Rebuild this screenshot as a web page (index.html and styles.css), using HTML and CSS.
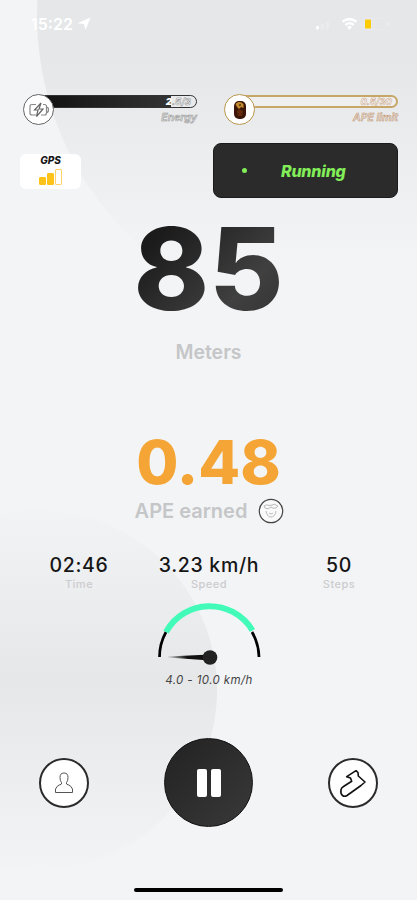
FILE: index.html
```
<!DOCTYPE html>
<html lang="en">
<head>
    <meta charset="UTF-8">
    <meta name="viewport" content="width=device-width, initial-scale=1.0">
    <title>Running</title>
    <link rel="stylesheet" href="styles.css">
</head>
<body>
<div class="screen">

    <header class="status-bar">
        <div class="clock">
            <span>15:22</span>
            <svg width="14" height="14" viewBox="0 0 14 14"><path d="M13.5 .5 L8.5 13 L7 7 L.5 6.2 Z" fill="#fff"/></svg>
        </div>
        <svg class="status-icons" width="76" height="18" viewBox="0 0 76 18">
            <rect x="1" y="11" width="3" height="3.5" rx="1" fill="#fff"/>
            <rect x="6" y="9" width="3" height="5.5" rx="1" fill="#ebecee"/>
            <rect x="11" y="7" width="3" height="7.5" rx="1" fill="#ebecee"/>
            <path d="M27.500 6.700 Q34.500 1.500 41.500 6.700" fill="none" stroke="#fff" stroke-width="2.500"/>
            <path d="M30.200 10 Q34.500 6.500 38.800 10" fill="none" stroke="#fff" stroke-width="2.300"/>
            <path d="M32 12 Q34.500 10 37 12 L34.500 15 Z" fill="#fff"/>
            <rect x="48.500" y="3.500" width="23" height="11" rx="3.500" fill="none" stroke="#e9eaec"/>
            <rect x="50" y="4.500" width="6" height="9" rx="1" fill="#ffcb05"/>
            <path d="M74 7v4" stroke="#f0f1f3"/>
        </svg>
    </header>

    <section class="meters">
        <div class="meter energy">
            <div class="badge">
                <svg width="22" height="18" viewBox="0 0 22 18" fill="none" stroke="#888" stroke-width="1.200">
                    <path d="M8 3.500H4Q2 3.500 2 5.500V12Q2 14 4 14H8M15 3.500H16.500Q18.500 3.500 18.500 5.500V12Q18.500 14 16.500 14H13M18.500 6Q20.500 6 20.500 8.700T18.500 11.500"/>
                    <path d="M13 2L6.500 9H10L8.500 15.500L15 8H11Z" stroke="#666"/>
                </svg>
            </div>
            <div class="track"><div class="fill" style="width: 84%"></div><span><b>2</b>.5/3</span></div>
            <p>Energy</p>
        </div>
        <div class="meter ape">
            <div class="badge">
                <svg width="14" height="20" viewBox="0 0 14 20">
                    <rect x="1" y="1" width="12" height="18" rx="5" fill="#3b1608"/>
                    <path d="M2.500 4Q6 0 10.500 4V8L8 7L6 9L4 7Z" fill="#c28a2c"/>
                    <path d="M4 11L6 9L10 11L9 16H5Z" fill="#63290d"/>
                    <path d="M6 5h2" stroke="#1d0b05"/>
                </svg>
            </div>
            <div class="track"><span>0.5/30</span></div>
            <p>APE limit</p>
        </div>
    </section>

    <section class="state-row">
        <div class="gps">
            <span>GPS</span>
            <div class="bars"><i class="low"></i><i class="mid"></i><i class="high"></i></div>
        </div>
        <div class="state"><i class="dot"></i><span>Running</span></div>
    </section>

    <section class="distance">
        <div class="distance-value">85</div>
        <div class="distance-label">Meters</div>
    </section>

    <section class="earned">
        <div class="earned-value">0.48</div>
        <div class="earned-label">
            <span>APE earned</span>
            <svg width="26" height="26" viewBox="0 0 26 26" fill="none">
                <circle cx="13" cy="13" r="11.700" fill="#fafafa" stroke="#444" stroke-width="1.200"/>
                <path d="M6 8Q8 6 12 7.500Q17 5 20 8L18 10Q15 11 13 9Q10 12 7 10ZM8 13Q9 19 13 19Q17 19 18 13M11 15Q13 17 15 15" stroke="#aaa" stroke-width=".8"/>
            </svg>
        </div>
    </section>

    <section class="stats">
        <div class="stat"><strong>02:46</strong><span>Time</span></div>
        <div class="stat"><strong>3.23 km/h</strong><span>Speed</span></div>
        <div class="stat"><strong>50</strong><span>Steps</span></div>
    </section>

    <section class="gauge">
        <svg width="108" height="64" viewBox="0 0 108 64" fill="none">
            <defs>
                <linearGradient id="needle"><stop offset="0" stop-color="#111" stop-opacity=".1"/><stop offset=".45" stop-color="#111"/></linearGradient>
            </defs>
            <path d="M4.500 55A49.700 51 0 0 1 11 30M97 30A49.700 51 0 0 1 104 55" stroke="#000" stroke-width="2.700"/>
            <path d="M11 30C29 -3 77 -5 97.500 28.500" stroke="#43fbb9" stroke-width="6"/>
            <path d="M13 54.500L55 52.500V58.500L13 55.500Z" fill="url(#needle)"/>
            <circle cx="55" cy="55.500" r="7.300" fill="#222"/>
        </svg>
        <span>4.0 - 10.0 km/h</span>
    </section>

    <nav class="controls">
        <button class="round" aria-label="Profile">
            <svg width="20" height="22" viewBox="0 0 20 22" fill="none" stroke="#555" stroke-width="1"><path d="M1.500 20.500V17Q3 13 7.500 12V10.500Q6 9 6 5.500Q6 1 10 1T14 5.500Q14 9 12.500 10.500V12Q17 13 18.500 17V20.500Z"/></svg>
        </button>
        <button class="pause" aria-label="Pause"><i></i><i></i></button>
        <button class="round" aria-label="Shoes">
            <svg width="28" height="30" viewBox="0 0 28 30" fill="none" stroke="#111" stroke-width="1.600" stroke-linejoin="round"><path d="M7.700 8.700L17 2.700L19 4.500L19.300 8L26 14L22 17.500L8 27.500Q5.500 29 3.500 27.500Q1.300 26 2 22Q2 20 4.500 18.500L12.700 13.300L11.500 10Z"/></svg>
        </button>
    </nav>

    <div class="home-bar"></div>
</div>
</body>
</html>
```
FILE: styles.css
```
* {
    box-sizing: border-box;
}
body {
    margin: 0;
    font-family: Inter, "Liberation Sans", sans-serif;
    color: #161616;
}
p {
    margin: 0;
}
.screen {
    display: flex;
    flex-direction: column;
    width: 417px;
    height: 900px;
    overflow: hidden;
    /* the two large discs fade into the page at top and bottom */
    background:
        linear-gradient(rgba(243, 244, 246, 0) 60px, rgba(243, 244, 246, 1) 260px, rgba(243, 244, 246, 1) 500px, rgba(243, 244, 246, 0) 680px, rgba(243, 244, 246, 1) 875px),
        radial-gradient(circle at 347px 15px, #e6e7e8 309.500px, transparent 310.500px),
        radial-gradient(circle at 37px 690px, #e6e7e8 179.500px, transparent 180.500px),
        #f3f4f6;
}
.status-bar {
    display: flex;
    justify-content: space-between;
    height: 94px;
    padding: 15px 26px 0 31px;
}
.clock {
    display: flex;
    align-items: center;
    gap: 4px;
    height: 18px;
    color: #fff;
    font-size: 16px;
    font-weight: 600;
}

/* energy and ape bars */
.meters {
    display: flex;
    gap: 27px;
    height: 49px;
    padding: 0 19px 0 23px;
}
.meter {
    position: relative;
    width: 174px;
    padding: 1px 0 0 15px;
    font-style: italic;
    text-align: right;
}
.badge {
    position: absolute;
    left: 0;
    top: 0;
    z-index: 1;
    display: flex;
    align-items: center;
    justify-content: center;
    width: 31px;
    height: 31px;
    border: 1px solid #666;
    border-radius: 50%;
    background: #fff;
}
.track {
    position: relative;
    height: 13px;
    border: 1px solid #333;
    border-radius: 7px;
    overflow: hidden;
}
.fill {
    height: 100%;
    background: linear-gradient(90deg, #111, #333);
}
.track span {
    position: absolute;
    right: 5px;
    top: 0;
    color: #fff;
    font-size: 9.500px;
    font-weight: 700;
    line-height: 12px;
    -webkit-text-stroke: .5px #888;
}
.track b {
    -webkit-text-stroke: 0;
}
.meter p {
    margin-top: 4px;
    color: #eee;
    font-size: 10.500px;
    font-weight: 600;
    line-height: 12px;
    -webkit-text-stroke: .6px #999;
}
.ape .badge {
    border-color: #b9964d;
}
.ape .track {
    border: 2px solid #c6a768;
    background: #f0efef;
}
.ape .track span {
    top: -1px;
    right: 4px;
}
.ape .track span, .ape p {
    -webkit-text-stroke-color: #c49a78;
}

.state-row {
    display: flex;
    justify-content: space-between;
    height: 56px;
    padding: 0 19px 0 20px;
}
.gps {
    display: flex;
    flex-direction: column;
    align-items: center;
    width: 61px;
    height: 35px;
    margin-top: 11px;
    padding-top: 1px;
    border-radius: 6px;
    background: #fff;
    font-size: 10px;
    font-style: italic;
    font-weight: 800;
    line-height: 11px;
}
.bars {
    display: flex;
    align-items: flex-end;
    gap: 1px;
    height: 17px;
    margin-top: 2px;
}
.bars i {
    width: 7px;
    border: 1px solid #ffd36a;
    border-radius: 1px;
}
.bars .low, .bars .mid {
    border-color: #fdc31b;
    background: #fdc31b;
}
.low {
    height: 8px;
}
.mid {
    height: 12px;
}
.high {
    height: 16px;
}
.state {
    display: flex;
    align-items: center;
    width: 185px;
    height: 55px;
    padding-left: 28px;
    border: 1px solid #1b1b1b;
    border-radius: 8px;
    background: #2b2b2b;
    color: #82ee58;
    font-size: 16px;
    font-style: italic;
    font-weight: 800;
    letter-spacing: -.2px;
}
.dot {
    width: 5px;
    height: 5px;
    margin-right: 34px;
    border-radius: 50%;
    background: #82ee58;
}

.distance {
    height: 232px;
    text-align: center;
}
.distance-value {
    height: 140px;
    background: linear-gradient(135deg, #1b1b1b 35%, #404040 60%, #202020 90%);
    -webkit-background-clip: text;
    background-clip: text;
    color: transparent;
    font-size: 114px;
    font-weight: 800;
    line-height: 140px;
}
.distance-label {
    margin-top: 1px;
    color: #c5c6c8;
    font-size: 19.500px;
    font-weight: 600;
    line-height: 24px;
}
.earned {
    height: 121px;
    text-align: center;
}
.earned-value {
    height: 62px;
    color: #f4a535;
    font-size: 61px;
    font-weight: 800;
    line-height: 62px;
}
.earned-label {
    display: flex;
    align-items: center;
    justify-content: center;
    gap: 11px;
    margin-top: 5px;
    padding-left: 2px;
    color: #c5c6c8;
    font-size: 20px;
    font-weight: 600;
    line-height: 26px;
}

.stats {
    display: grid;
    grid-template-columns: 130px 130px 130px;
    justify-content: center;
    height: 50px;
    padding-left: 1px;
}
.stat {
    display: flex;
    flex-direction: column;
    align-items: center;
}
.stat strong {
    font-size: 19.500px;
    font-weight: 500;
    letter-spacing: .7px;
    line-height: 26px;
}
.stat span {
    color: #cbccce;
    font-size: 11px;
    font-weight: 500;
    letter-spacing: .5px;
    line-height: 13px;
}
.gauge {
    display: flex;
    flex-direction: column;
    align-items: center;
    height: 136px;
}
.gauge span {
    margin-top: 5px;
    padding-left: 1px;
    color: #444;
    font-size: 11.500px;
    font-style: italic;
    letter-spacing: .4px;
    line-height: 18px;
}

.controls {
    display: flex;
    align-items: center;
    justify-content: space-between;
    height: 89px;
    padding: 0 39px;
}
.controls button {
    display: flex;
    align-items: center;
    justify-content: center;
    padding: 0;
    border-radius: 50%;
}
.round {
    width: 50px;
    height: 50px;
    border: 2px solid #2b2b2b;
    background: #fff;
}
.pause {
    gap: 4px;
    width: 89px;
    height: 89px;
    border: 1px solid #111;
    background: linear-gradient(135deg, #222, #393939);
}
.pause i {
    width: 10px;
    height: 28px;
    border-radius: 2px;
    background: #fff;
}
.home-bar {
    align-self: center;
    width: 149px;
    height: 4px;
    margin-top: 61px;
    border-radius: 2px;
    background: #000;
}
```
